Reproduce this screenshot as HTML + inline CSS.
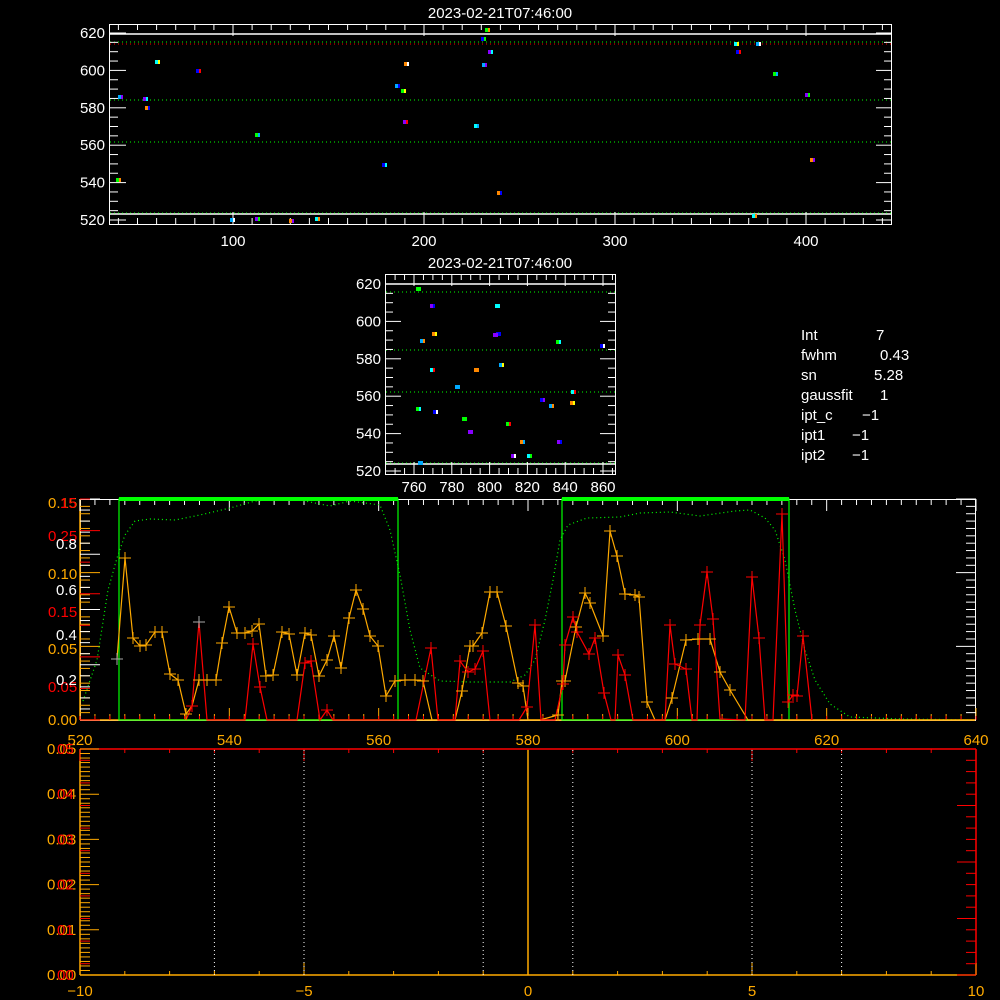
<!DOCTYPE html>
<html><head><meta charset="utf-8"><style>
html,body{margin:0;padding:0;background:#000;width:1000px;height:1000px;overflow:hidden}
svg{display:block}
text{font-family:"Liberation Sans",sans-serif;font-size:15px}
</style></head><body>
<svg id="s" width="1000" height="1000" xmlns="http://www.w3.org/2000/svg">
<rect width="1000" height="1000" fill="#000"/>
<g id="g"></g>
<text x="500" y="18" fill="#fff" text-anchor="middle" font-size="17">2023-02-21T07:46:00</text>
<text x="500" y="268" fill="#fff" text-anchor="middle" font-size="17">2023-02-21T07:46:00</text>
<g fill="#fff" font-size="18">
<text x="801" y="340">Int</text><text x="876" y="340">7</text>
<text x="801" y="360">fwhm</text><text x="880" y="360">0.43</text>
<text x="801" y="380">sn</text><text x="874" y="380">5.28</text>
<text x="801" y="400">gaussfit</text><text x="880" y="400">1</text>
<text x="801" y="420">ipt_c</text><text x="862" y="420">−1</text>
<text x="801" y="440">ipt1</text><text x="852" y="440">−1</text>
<text x="801" y="460">ipt2</text><text x="852" y="460">−1</text>
</g>
</svg>
<script>
var g=document.getElementById('g'),h='';
function L(x1,y1,x2,y2,c,w,d){h+='<line x1="'+x1+'" y1="'+y1+'" x2="'+x2+'" y2="'+y2+'" stroke="'+c+'" stroke-width="'+(w||1)+'"'+(d?' stroke-dasharray="'+d+'"':'')+'/>';}
function T(x,y,s,c,a){h+='<text x="'+x+'" y="'+y+'" fill="'+c+'" text-anchor="'+(a||'middle')+'">'+s+'</text>';}
function R(x,y,w,hh,c){h+='<rect x="'+x+'" y="'+y+'" width="'+w+'" height="'+hh+'" fill="'+c+'"/>';}
function P(pts,c,d){h+='<polyline fill="none" stroke="'+c+'" stroke-width="1.2" points="'+pts.map(function(p){return p.join(',')}).join(' ')+'"'+(d?' stroke-dasharray="'+d+'"':'')+'/>';}
// top plot
h+='<rect x="109.5" y="24.5" width="782" height="200" fill="none" stroke="#fff"/>';
L(110,34,892,34,'#fff',1.5);L(110,214,892,214,'#fff',1.5);
[42,100,142,213].forEach(function(y){L(110,y,892,y,'#0f0',1,'1 3')});L(110,44,892,44,'#f00',1,'1 3');
for(var v=520;v<=620;v+=5){var y=33+(620-v)*1.87;L(110,y,v%20==0?126:118,y,'#fff');L(892,y,v%20==0?876:884,y,'#fff');if(v%20==0)T(105,y+5,v,'#fff','end');}
for(var v=40;v<=440;v+=10){var x=42+v*1.91;L(x,224,x,v%100==0?212:218,'#fff');L(x,24,x,v%100==0?36:30,'#fff');if(v%100==0)T(x,246,v,'#fff');}
var cols=['#0af','#0f0','#80f','#f80','#0ff','#00f','#ff0','#f00','#fff'];
[[120,97],[118,180],[145,99],[147,108],[157,62],[198,71],[232,220],[257,135],[257,219],[291,221],[317,219],[384,165],[397,86],[403,91],[405,122],[406,64],[476,126],[483,39],[484,65],[487,30],[490,52],[499,193],[736,44],[738,52],[758,44],[775,74],[807,95],[812,160],[754,216]].forEach(function(p,i){R(p[0]-2,p[1]-2,3,4,cols[i%6]);R(p[0]+1,p[1]-2,2,4,cols[(i+2)%9]);});
// middle plot
h+='<rect x="385.5" y="274.5" width="230" height="200" fill="none" stroke="#fff"/>';
L(386,284,615,284,'#fff',1.5);L(386,464,615,464,'#fff',1.5);
[292,350,392,463].forEach(function(y){L(386,y,615,y,'#0f0',1,'1 3')});
for(var v=520;v<=620;v+=5){var y=284+(620-v)*1.87;L(386,y,v%20==0?401:393,y,'#fff');L(615,y,v%20==0?600:608,y,'#fff');if(v%20==0)T(381,y+5,v,'#fff','end');}
for(var v=750;v<=865;v+=5){var x=414+(v-760)*1.89;if(x<386||x>615)continue;L(x,474,x,v%20==0?462:468,'#fff');L(x,274,x,v%20==0?286:280,'#fff');if(v%20==0)T(x,492,v,'#fff');}
[[422,341],[418,409],[432,306],[434,334],[432,370],[435,412],[457,387],[464,419],[470,432],[476,370],[497,306],[498,334],[501,365],[508,424],[513,456],[522,442],[529,456],[542,400],[551,406],[558,342],[559,442],[572,403],[573,392],[602,346],[420,463],[418,289],[495,335]].forEach(function(p,i){R(p[0]-2,p[1]-2,3,4,cols[i%6]);R(p[0]+1,p[1]-2,2,4,cols[(i+3)%9]);});
// spectrum plot
var X0=80,XS=(976-80)/120;function sx(v){return X0+(v-520)*XS}
h+='<rect x="80.5" y="499.5" width="895" height="221" fill="none" stroke="#fff"/>';
L(80,720,976,720,'#fa0',1.5);L(80,499,80,720,'#fa0',1.5);
for(var v=520;v<=640;v+=2){var x=sx(v);L(x,720,x,v%20==0?708:714,'#fa0');L(x,499,x,v%20==0?511:505,'#fff');L(x,720,x,716,'#f00');}
for(var i=0;i<=30;i++){var y=720-i*221/30;L(80,y,i%10==0?100:90,y,'#fa0');L(976,y,i%10==0?956:966,y,'#fff');}
for(var i=0;i<=20;i++){var y=720-i*221/20;L(80,y,i%5==0?100:90,y,'#fff');}
for(var i=0;i<=7;i++){var y=720-i*221/7;L(80,y,i%2==0?100:90,y,'#f00');}
T(48,508,'0.15','#fa0','start');T(48,579,'0.10','#fa0','start');T(48,654,'0.05','#fa0','start');T(48,725,'0.00','#fa0','start');
T(48,541,'0.25','#f00','start');T(48,617,'0.15','#f00','start');T(48,692,'0.05','#f00','start');T(60,508,'15','#f00','start');
T(56,549,'0.8','#fff','start');T(56,595,'0.6','#fff','start');T(56,640,'0.4','#fff','start');T(56,685,'0.2','#fff','start');
[520,540,560,580,600,620,640].forEach(function(v){T(sx(v),745,v,'#fa0')});
L(119,499,119,720,'#aaa');L(789,499,789,720,'#aaa');
h+='<rect x="119" y="499" width="279" height="221" fill="none" stroke="#0f0" stroke-width="1.2"/>';R(119,497,279,4,'#0f0');
h+='<rect x="562" y="499" width="227" height="221" fill="none" stroke="#0f0" stroke-width="1.2"/>';R(562,497,227,4,'#0f0');
P([[83,701],[97,660],[108,590],[117,558],[125,535],[135,521],[150,519],[175,520],[200,515],[230,508],[255,501],[290,498],[330,506],[350,501],[380,505],[390,530],[400,575],[410,630],[420,668],[440,681],[470,682],[510,682],[525,675],[535,660],[545,620],[553,580],[560,540],[568,525],[587,518],[620,517],[640,513],[670,512],[700,516],[735,511],[750,510],[765,518],[775,530],[785,560],[795,610],[805,650],[815,680],[830,704],[850,717],[900,719],[975,720]],'#0f0','1 3');
var O=[[117,659],[125,558],[133,638],[140,646],[146,645],[155,632],[162,632],[170,674],[178,680],[186,714],[192,706],[199,680],[207,680],[216,680],[222,643],[229,607],[237,633],[245,633],[252,631],[259,624],[266,676],[273,675],[282,632],[289,634],[297,675],[305,633],[311,635],[319,676],[327,660],[334,636],[341,668],[349,618],[356,590],[363,609],[370,636],[378,646],[386,696],[395,681],[405,680],[415,680],[423,681],[432,720],[440,720],[455,720],[462,691],[470,646],[473,646],[482,633],[490,592],[497,592],[506,626],[518,683],[523,686],[528,720],[540,720],[558,715],[562,681],[565,681],[576,627],[585,593],[590,603],[603,636],[610,531],[617,556],[625,594],[635,595],[639,597],[647,702],[655,720],[665,720],[672,698],[686,640],[698,639],[710,639],[720,672],[730,690],[748,720],[975,720]];
P(O,'#fa0');
var Rr=[[186,720],[192,706],[199,622],[207,720],[245,720],[253,644],[260,687],[267,720],[297,720],[305,663],[311,661],[320,720],[327,710],[333,720],[416,720],[431,648],[438,720],[455,720],[460,661],[468,672],[475,669],[483,651],[490,720],[519,720],[527,707],[535,625],[541,720],[555,720],[563,684],[565,645],[573,617],[577,632],[589,654],[595,638],[604,693],[611,720],[615,720],[618,655],[625,675],[633,720],[665,720],[670,625],[675,664],[686,669],[692,720],[697,720],[700,625],[707,572],[713,619],[720,719],[745,720],[752,577],[759,638],[765,720],[773,720],[782,514],[788,702],[793,695],[797,696],[803,636],[812,720]];
P(Rr,'#f00');
function cross(p,c){L(p[0]-6,p[1],p[0]+6,p[1],c);L(p[0],p[1]-6,p[0],p[1]+6,c);}
O.slice(0,-1).forEach(function(p){if(p[1]<719)cross(p,'#fa0')});
Rr.forEach(function(p){if(p[1]<719)cross(p,'#f00')});
cross([117,659],'#aaa');cross([199,622],'#aaa');
// bottom plot
var B0=528,BS=44.8;function bx(v){return B0+v*BS}
L(80,749,976,749,'#f00',1.5);L(976,749,976,975,'#f00',1.5);L(80,975,976,975,'#fa0',1.5);L(80,749,80,975,'#fa0',1.5);
for(var v=-10;v<=10;v++){var x=bx(v);L(x,975,x,v%5==0?963:971,'#fa0');L(x,749,x,v%5==0?761:753,'#f00');}
for(var i=0;i<=50;i++){var y=975-i*226/50;L(80,y,i%10==0?99:90,y,'#fa0');}
for(var i=0;i<=20;i++){var y=975-i*226/20;L(976,y,i%5==0?957:966,y,'#f00');if(i%2==1)L(80,y,90,y,'#f00');}
for(var i=0;i<=5;i++){var y=975-i*226/5;T(47,y+5,'0.0'+i,'#fa0','start');T(57,y+5,'0'+i,'#f00','start');}
[-7,-5,-1,1,5,7].forEach(function(v){L(bx(v),750,bx(v),975,'#fff',1,'1 3')});
L(528,750,528,975,'#fa0',1.5);
[[-10,'−10'],[-5,'−5'],[0,'0'],[5,'5'],[10,'10']].forEach(function(a){T(bx(a[0]),996,a[1],'#fa0')});
g.innerHTML=h;
</script>
</body></html>
